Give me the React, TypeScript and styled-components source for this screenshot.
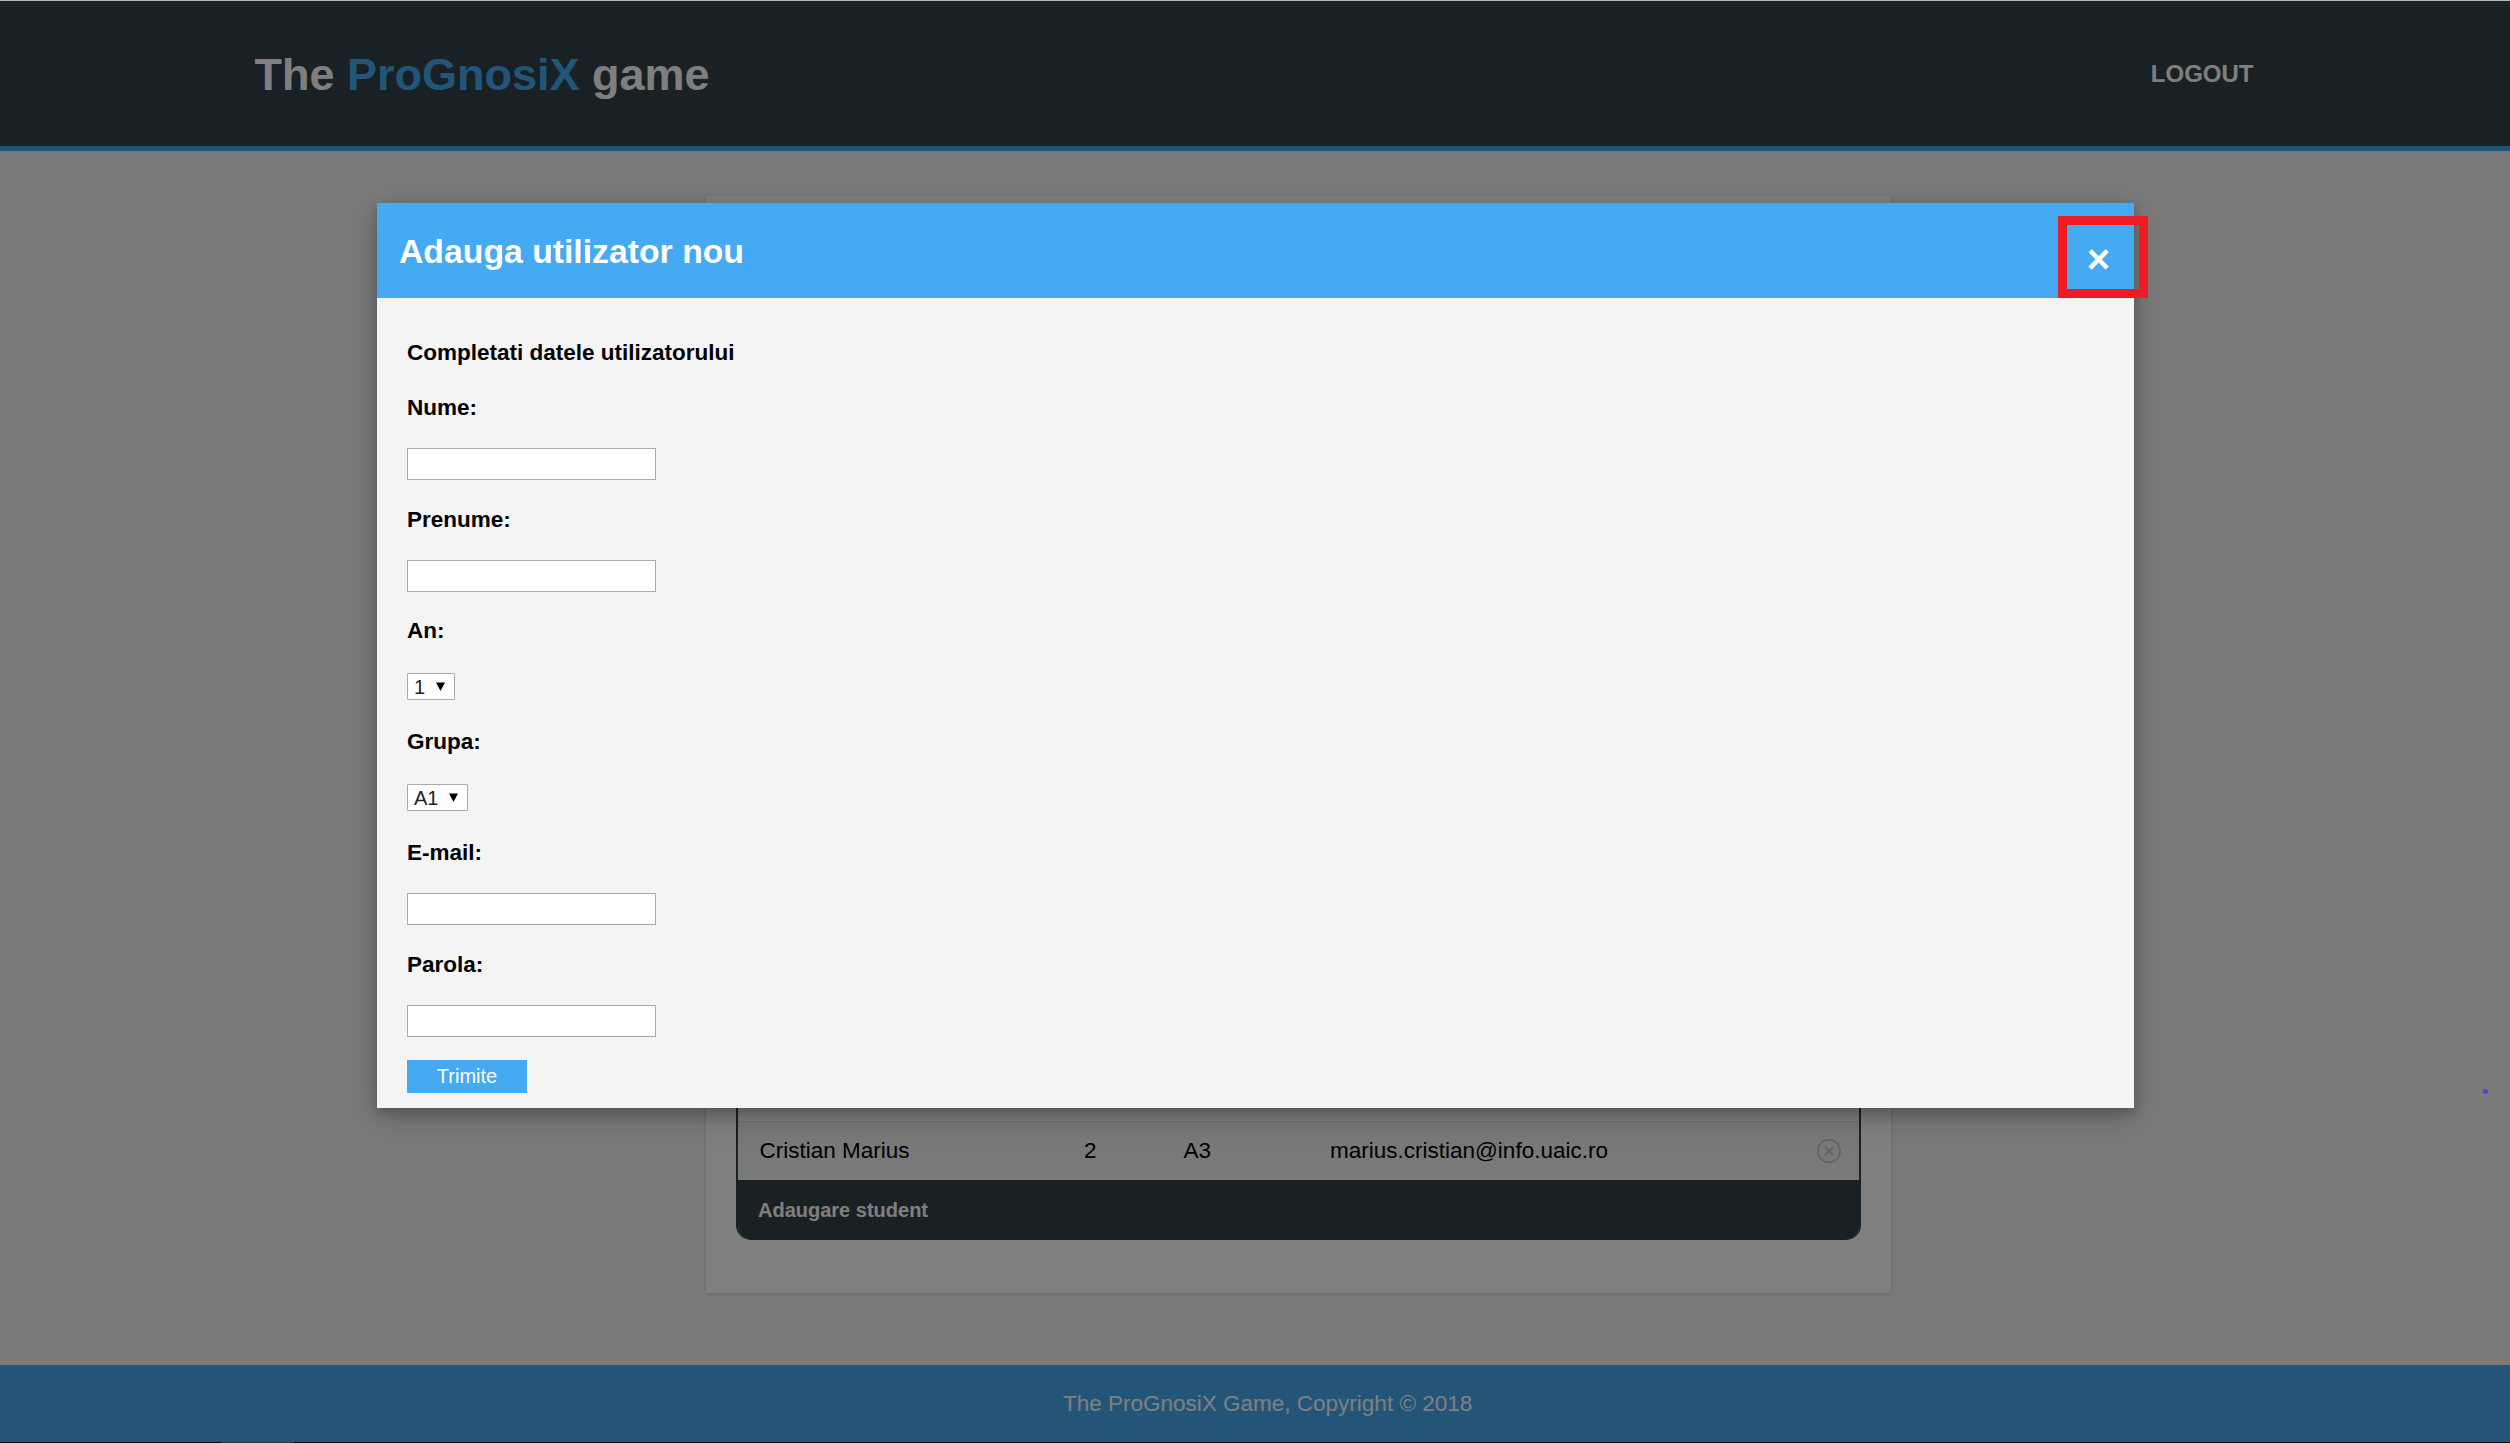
import React from "react";
import styled, { createGlobalStyle } from "styled-components";

const GlobalStyle = createGlobalStyle`
  * { box-sizing: border-box; }
  body {
    margin: 0;
    background: #000;
    font-family: "Liberation Sans", Arial, Helvetica, sans-serif;
    font-size: 22.5px;
    color: #000;
  }
`;

const accent = "#46aaf3";
const dark = "#35424a";

const Window = styled.div`
  position: relative;
  display: flex;
  flex-direction: column;
  width: 2510px;
  height: 1443px;
  overflow: hidden;
`;

const TopEdge = styled.div`
  flex: none;
  height: 1px;
  background: #b9b9b9;
`;

const BottomEdge = styled.div`
  flex: none;
  display: flex;
  height: 1px;
  padding-left: 221px;
  background: #000;
`;

const EdgeMark = styled.div`
  width: 73px;
  background: #333;
`;

const Page = styled.div`
  position: relative;
  flex: 1;
  display: flex;
  flex-direction: column;
  background: #f4f4f4;
`;

const Header = styled.header`
  display: flex;
  justify-content: space-between;
  height: 150px;
  padding: 0 256.5px 0 254.5px;
  background: ${dark};
  border-bottom: 5px solid ${accent};
  color: #fff;
`;

const Brand = styled.h1`
  margin: 0;
  padding-top: 48px;
  font-size: 45px;
  line-height: 51px;
  white-space: nowrap;
`;

const Highlight = styled.span`
  color: ${accent};
`;

const Logout = styled.a`
  padding-top: 59px;
  font-size: 24px;
  line-height: 28px;
  font-weight: bold;
  text-transform: uppercase;
`;

const Main = styled.main`
  flex: 1;
  padding: 45px 619px 72px 706px;
  display: flex;
`;

const Card = styled.section`
  flex: 1;
  display: flex;
  padding: 30px 30px 53px;
  background: #fff;
  box-shadow: 0 1px 4px rgba(0, 0, 0, 0.16);
`;

const Table = styled.div`
  flex: 1;
  display: flex;
  flex-direction: column;
  justify-content: flex-end;
  border: 2px solid ${dark};
  border-bottom: 0;
  border-radius: 15px;
  overflow: hidden;
`;

const Row = styled.div`
  display: grid;
  grid-template-columns: 324.5px 99.5px 146.5px 1fr 24px;
  height: 59px;
  padding: 0 18px 0 21.5px;
  border-top: 1px solid #ddd;
  background: #f2f2f2;
`;

const Cell = styled.span`
  padding-top: 13px;
  line-height: 31px;
  white-space: nowrap;
`;

const RemoveIcon = styled.svg`
  display: block;
  width: 24px;
  height: 24px;
  margin-top: 17px;
`;

const TableFooter = styled.div`
  height: 60px;
  padding: 17px 20px 0;
  background: ${dark};
  color: #fff;
  font-size: 20px;
  line-height: 26px;
  font-weight: bold;
`;

const Footer = styled.footer`
  height: 77px;
  padding: 23px 0 0 1063px;
  line-height: 31px;
  background: ${accent};
  color: #fff;
`;

const Overlay = styled.div`
  position: absolute;
  inset: 0;
  display: flex;
  justify-content: center;
  align-items: flex-start;
  padding: 202px 376px 0 377px;
  background: rgba(0, 0, 0, 0.5);
`;

const Modal = styled.div`
  position: relative;
  flex: 1;
  height: 905px;
  background: #f4f4f4;
  box-shadow: 0 6px 12px 0 rgba(0, 0, 0, 0.2), 0 9px 30px 0 rgba(0, 0, 0, 0.19);
`;

const ModalHeader = styled.div`
  display: flex;
  justify-content: space-between;
  height: 95px;
  padding: 0 24px 0 22px;
  background: ${accent};
  color: #fff;
`;

const ModalTitle = styled.h2`
  margin: 0;
  padding-top: 29px;
  font-size: 33.75px;
  line-height: 38px;
`;

const Close = styled.span`
  padding-top: 32px;
  font-size: 40px;
  line-height: 48px;
  font-weight: bold;
`;

const Form = styled.form`
  display: flex;
  flex-direction: column;
  align-items: flex-start;
  padding: 39px 30px 0;
`;

const Label = styled.label`
  line-height: 31px;
  font-weight: bold;
`;

const Intro = styled(Label)`
  margin-bottom: 24px;
`;

const Field = styled.div<{ $height: number }>`
  display: flex;
  flex-direction: column;
  align-items: flex-start;
  height: ${(p) => p.$height}px;
`;

const TextInput = styled.input`
  width: 249px;
  height: 32px;
  margin: 25px 0 0;
  padding: 1px 3px;
  border: 1px solid #a9a9a9;
  border-radius: 0;
  background: #fff;
  outline: none;
`;

const SelectBox = styled.div<{ $width: number }>`
  display: flex;
  justify-content: space-between;
  width: ${(p) => p.$width}px;
  height: 27px;
  margin-top: 27px;
  padding: 1px 9px 0 6px;
  border: 1px solid #a9a9a9;
  border-radius: 1px;
  background: #fff;
  color: #222;
  font-size: 20px;
  line-height: 25px;
`;

const Arrow = styled.svg`
  display: block;
  width: 9px;
  height: 9px;
  margin-top: 7px;
`;

const Submit = styled.button`
  width: 120px;
  height: 33px;
  padding: 0;
  border: 0;
  background: ${accent};
  color: #fff;
  font-family: inherit;
  font-size: 20px;
  line-height: 31px;
`;

const Frame = styled.div`
  position: absolute;
  top: 13px;
  right: -14px;
  width: 90px;
  height: 82px;
  border: 9px solid #ed1c24;
`;

const Dot = styled.span`
  position: absolute;
  left: 2483px;
  top: 1088px;
  width: 5px;
  height: 5px;
  border-radius: 50%;
  background: #3f48cc;
`;

type FieldSpec = { label: string; height: number; value?: string; width?: number };

const fields: FieldSpec[] = [
  { label: "Nume:", height: 112 },
  { label: "Prenume:", height: 111 },
  { label: "An:", height: 111, value: "1", width: 48 },
  { label: "Grupa:", height: 111, value: "A1", width: 61 },
  { label: "E-mail:", height: 112 },
  { label: "Parola:", height: 111 },
];

export default function App() {
  return (
    <Window>
      <GlobalStyle />
      <TopEdge />
      <Page>
        <Header>
          <Brand>
            The <Highlight>ProGnosiX</Highlight> game
          </Brand>
          <Logout>Logout</Logout>
        </Header>
        <Main>
          <Card>
            <Table>
              <Row>
                <Cell>Cristian Marius</Cell>
                <Cell>2</Cell>
                <Cell>A3</Cell>
                <Cell>marius.cristian@info.uaic.ro</Cell>
                <RemoveIcon viewBox="0 0 24 24" fill="none" stroke="#c4c4c4" strokeWidth="1.5">
                  <circle cx="12" cy="12" r="11.2" />
                  <path d="M8 8l8 8M16 8l-8 8" strokeWidth="1.8" />
                </RemoveIcon>
              </Row>
              <TableFooter>Adaugare student</TableFooter>
            </Table>
          </Card>
        </Main>
        <Footer>The ProGnosiX Game, Copyright © 2018</Footer>
        <Overlay>
          <Modal>
            <ModalHeader>
              <ModalTitle>Adauga utilizator nou</ModalTitle>
              <Close>×</Close>
            </ModalHeader>
            <Form>
              <Intro as="div">Completati datele utilizatorului</Intro>
              {fields.map((f) => (
                <Field key={f.label} $height={f.height}>
                  <Label>{f.label}</Label>
                  {f.value ? (
                    <SelectBox $width={f.width ?? 48}>
                      {f.value}
                      <Arrow viewBox="0 0 9 9">
                        <path d="M0 0.5h9L4.5 9z" fill="#000" />
                      </Arrow>
                    </SelectBox>
                  ) : (
                    <TextInput />
                  )}
                </Field>
              ))}
              <Submit type="button">Trimite</Submit>
            </Form>
            <Frame />
          </Modal>
          <Dot />
        </Overlay>
      </Page>
      <BottomEdge>
        <EdgeMark />
      </BottomEdge>
    </Window>
  );
}
